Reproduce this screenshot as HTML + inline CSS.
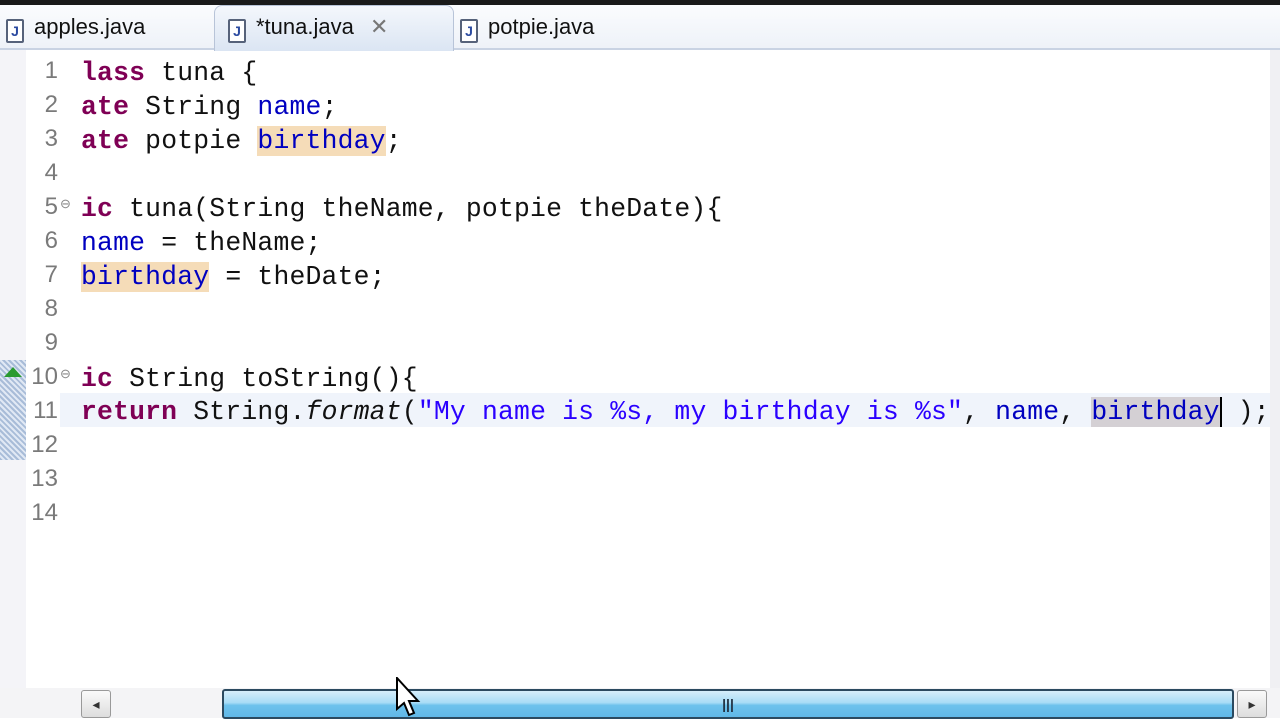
<!DOCTYPE html>
<html><head><style>
body{margin:0;width:1280px;height:720px;overflow:hidden;background:#fff;font-family:"Liberation Sans",sans-serif;position:relative}
.top{position:absolute;left:0;top:0;width:1280px;height:5px;background:#1a1a1a}
.tabs{position:absolute;left:0;top:5px;width:1280px;height:43px;background:linear-gradient(#fbfcfe,#eef2f8);border-bottom:2px solid #c9d3e3}
.tab{position:absolute;top:10px;font-size:22px;color:#111;height:34px;line-height:34px}
.act{position:absolute;left:214px;top:5px;width:238px;height:45px;background:linear-gradient(#f4f7fc,#dbe5f3);border:1px solid #b8c4d8;border-bottom:none;border-radius:8px 8px 0 0}
.ic{display:inline-block;width:14px;height:20px;border:2px solid #56627a;border-radius:2px;background:#fff;vertical-align:-2px;margin-right:10px;font:bold 14px "Liberation Sans";color:#2a4aa0;text-align:center;line-height:20px}
.gut{position:absolute;left:0;top:50px;width:26px;height:640px;background:#f4f4f8}
.num{position:absolute;left:26px;width:32px;text-align:right;font:24px "Liberation Sans",sans-serif;color:#7a7a7a}
.code{position:absolute;left:78px;top:50px;width:1190px;height:640px;overflow:hidden}
.ln{position:absolute;left:3px;white-space:pre;font:26.4px "Liberation Mono",monospace;letter-spacing:0.2px;color:#111;height:34px;line-height:34px}
.k{color:#7f0055;font-weight:bold}.f{color:#0000c0}.s{color:#2a00ff}
.hl{background:#f5dcb8}.hg{background:#d4d0d4}
.cur{position:absolute;left:60px;top:393px;width:1210px;height:34px;background:#f0f4fb}
.sb{position:absolute;top:688px;height:30px}
</style></head><body>
<div class="top"></div>
<div class="tabs"></div>
<div class="act"></div>
<div class="tab" style="left:6px"><span class="ic">J</span>apples.java</div>
<div class="tab" style="left:228px"><span class="ic">J</span>*tuna.java <span style="color:#777;margin-left:10px">✕</span></div>
<div class="tab" style="left:460px"><span class="ic">J</span>potpie.java</div>
<div class="gut"></div>
<div style="position:absolute;left:0;top:360px;width:26px;height:100px;background:repeating-linear-gradient(45deg,#a8bcd8 0 2px,#e0e8f4 2px 4px)"></div>
<div style="position:absolute;left:4px;top:367px;width:0;height:0;border-left:9px solid transparent;border-right:9px solid transparent;border-bottom:10px solid #2a9a30"></div>
<div class="cur"></div>
<div style="position:absolute;right:0;top:50px;width:10px;height:640px;background:#f0f0f3"></div>
<div class="num" style="top:57px">1</div><div class="num" style="top:91px">2</div><div class="num" style="top:125px">3</div><div class="num" style="top:159px">4</div><div class="num" style="top:193px">5</div><div class="num" style="top:227px">6</div><div class="num" style="top:261px">7</div><div class="num" style="top:295px">8</div><div class="num" style="top:329px">9</div><div class="num" style="top:363px">10</div><div class="num" style="top:397px">11</div><div class="num" style="top:431px">12</div><div class="num" style="top:465px">13</div><div class="num" style="top:499px">14</div>
<div style="position:absolute;left:60px;top:196px;font-size:13px;color:#888">⊖</div>
<div style="position:absolute;left:60px;top:366px;font-size:13px;color:#888">⊖</div>
<div class="code">
<div class="ln" style="top:6px"><span class="k">lass</span> tuna {</div>
<div class="ln" style="top:40px"><span class="k">ate</span> String <span class="f">name</span>;</div>
<div class="ln" style="top:74px"><span class="k">ate</span> potpie <span class="f hl">birthday</span>;</div>
<div class="ln" style="top:142px"><span class="k">ic</span> tuna(String theName, potpie theDate){</div>
<div class="ln" style="top:176px"><span class="f">name</span> = theName;</div>
<div class="ln" style="top:210px"><span class="f hl">birthday</span> = theDate;</div>
<div class="ln" style="top:312px"><span class="k">ic</span> String toString(){</div>
<div class="ln" style="top:345px"><span class="k">return</span> String.<i>format</i>(<span class="s">"My name is %s, my birthday is %s"</span>, <span class="f">name</span>, <span class="f hg">birthday</span><span style="border-left:2px solid #000"> </span>);</div>
</div>
<div class="sb" style="left:0;width:1280px;background:#f4f4f6"></div>
<div class="sb" style="left:81px;width:28px;height:26px;top:690px;border:1px solid #999;border-radius:3px;background:linear-gradient(#fafafa,#ddd);font-size:14px;text-align:center;line-height:26px;color:#333">◂</div>
<div class="sb" style="left:1237px;width:28px;height:26px;top:690px;border:1px solid #999;border-radius:3px;background:linear-gradient(#fafafa,#ddd);font-size:14px;text-align:center;line-height:26px;color:#333">▸</div>
<div class="sb" style="left:222px;width:1008px;height:26px;top:689px;border:2px solid #2b4a60;border-radius:3px;background:linear-gradient(#d6eefb 0,#a8dcf6 45%,#6ec2ec 55%,#60b8e8 100%);text-align:center;line-height:26px;font-size:14px;font-weight:bold;color:#234">|||</div>
<svg style="position:absolute;left:396px;top:677px" width="26" height="42" viewBox="0 0 26 42"><path d="M1 1 L1 32 L8 26 L13 38 L18 36 L13 24 L22 24 Z" fill="#fff" stroke="#000" stroke-width="2"/></svg>
</body></html>
